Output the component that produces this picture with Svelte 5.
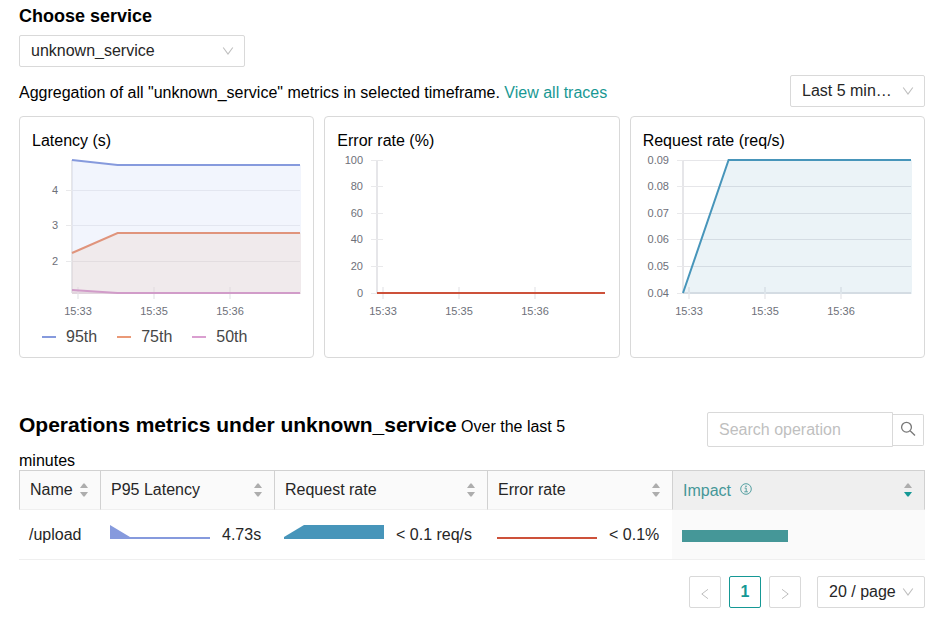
<script>
  let cardWidth = $state(293);

  const LEFT = 52;
  const TOP = 10;
  const BOTTOM = 143;
  const xTicks = [
    { at: 6 / 228, label: '15:33' },
    { at: 82 / 228, label: '15:35' },
    { at: 158 / 228, label: '15:36' }
  ];
  const stops = [0, 0.2, 1];

  const charts = [
    {
      title: 'Latency (s)',
      grid: true,
      ticks: [['4', 40], ['3', 75], ['2', 111]],
      series: [
        { name: '95th', color: '#869add', fill: '#dfe8fb', opacity: 0.42, ys: [10, 15, 15] },
        { name: '75th', color: '#e0947c', fill: '#ea9977', opacity: 0.12, ys: [103, 83, 83] },
        { name: '50th', color: '#d19cc9', fill: '#d79ccd', opacity: 0.12, ys: [140, 143, 143] }
      ],
      legend: [['95th', '#869add'], ['75th', '#ea9977'], ['50th', '#da9fd0']]
    },
    {
      title: 'Error rate (%)',
      grid: false,
      ticks: [['100', 10], ['80', 36], ['60', 63], ['40', 89], ['20', 116], ['0', 143]],
      series: [{ name: 'Error rate', color: '#cd513a', fill: 'none', opacity: 0, ys: [143, 143, 143] }],
      legend: []
    },
    {
      title: 'Request rate (req/s)',
      grid: true,
      ticks: [['0.09', 10], ['0.08', 36], ['0.07', 63], ['0.06', 89], ['0.05', 116], ['0.04', 143]],
      series: [{ name: 'Request rate', color: '#4795ba', fill: '#4795ba', opacity: 0.11, ys: [143, 10, 10] }],
      legend: []
    }
  ];

  const columns = ['Name', 'P95 Latency', 'Request rate', 'Error rate', 'Impact'];
  const impact = 45.5;
  const right = $derived(cardWidth - 13);
  const span = $derived(right - LEFT);

  function points(ys, end) {
    return ys.map((y, i) => `${i === 2 ? end : LEFT + stops[i] * span},${y}`).join(' ');
  }
</script>

{#snippet arrow()}
  <svg class="arrow" width="12" height="12" viewBox="0 0 12 12" aria-hidden="true">
    <path d="M1.2 2.5 6 9l4.8-6.5" fill="none" stroke="#bfbfbf" stroke-width="1.1" />
  </svg>
{/snippet}

<main>
  <h2 class="choose"><label for="service">Choose service</label></h2>
  <div class="select service">
    <select id="service"><option>unknown_service</option></select>
    {@render arrow()}
  </div>

  <div class="summary">
    <p>Aggregation of all "unknown_service" metrics in selected timeframe. <a href="#traces">View all traces</a></p>
    <div class="select timeframe">
      <select aria-label="Timeframe"><option>Last 5 minutes</option></select>
      {@render arrow()}
    </div>
  </div>

  <div class="cards">
    {#each charts as chart}
      <section class="card">
        <h3>{chart.title}</h3>
        <div class="plot" bind:clientWidth={cardWidth}>
          <svg width={cardWidth} height="170" role="img" aria-label={chart.title}>
            <rect x={LEFT - 1} y={TOP} width="2" height={BOTTOM - TOP} fill="#e6e6e9" />
            {#if chart.grid}
              <rect x={LEFT} y={BOTTOM - 1} width={span} height="2" fill="#e6e6e9" />
            {/if}
            {#each chart.ticks as [label, y]}
              <rect x={LEFT - 6} y={y} width="12" height="1" fill="#e9e9eb" />
              {#if chart.grid}
                <rect x={LEFT} y={y} width={span} height="1" fill="#e6e6e9" />
              {/if}
              <text x={LEFT - 14} y={y + 4} text-anchor="end">{label}</text>
            {/each}
            {#each xTicks as tick}
              <rect x={Math.round(LEFT + tick.at * span) - 1} y={BOTTOM - 6} width="2" height="12" fill="#efeff1" />
              <text x={Math.round(LEFT + tick.at * span)} y={BOTTOM + 22} text-anchor="middle">{tick.label}</text>
            {/each}
            {#each chart.series as s}
              <polygon points="{LEFT},{BOTTOM + 1} {points(s.ys, right + 1)} {right + 1},{BOTTOM + 1}" fill={s.fill} fill-opacity={s.opacity} />
            {/each}
            {#each chart.series as s}
              <polyline points={points(s.ys, right)} fill="none" stroke={s.color} stroke-width="2" />
            {/each}
          </svg>
        </div>
        {#if chart.legend.length}
          <ul>
            {#each chart.legend as [name, color]}
              <li>
                <svg width="14" height="2" aria-hidden="true"><rect width="14" height="2" fill={color} /></svg>
                {name}
              </li>
            {/each}
          </ul>
        {/if}
      </section>
    {/each}
  </div>

  <div class="operations">
    <div class="heading"><h2>Operations metrics under unknown_service</h2> Over the last 5 minutes</div>
    <form class="search" onsubmit={(e) => e.preventDefault()}>
      <input type="text" placeholder="Search operation" aria-label="Search operation" />
      <button type="submit" aria-label="Search">
        <svg width="16" height="16" viewBox="0 0 16 16" aria-hidden="true">
          <g fill="none" stroke="#777" stroke-width="1.3"><circle cx="6.5" cy="6.2" r="4.9" /><path d="m10.1 9.8 4.9 4.7" /></g>
        </svg>
      </button>
    </form>
  </div>

  <table>
    <colgroup>
      <col class="c-name" /><col class="c-latency" /><col class="c-request" /><col class="c-error" /><col />
    </colgroup>
    <thead>
      <tr>
        {#each columns as name, i}
          <th scope="col" class:sorted={i === 4} aria-sort={i === 4 ? 'descending' : undefined}>
            <div class="head">
              <span>{name}</span>
              {#if i === 4}
                <svg class="info" width="12" height="12" viewBox="0 0 12 12" aria-hidden="true">
                  <g fill="none" stroke="#459798" stroke-width=".9"><circle cx="6" cy="6" r="5.3" /><path d="M4.6 5.1h1.6v3.6M4.3 8.8h3.6" /></g>
                  <circle cx="6" cy="3.2" r=".8" fill="#459798" />
                </svg>
              {/if}
              <button class="sort" type="button" aria-label="Sort by {name}">
                <svg width="8" height="14" viewBox="0 0 8 14" aria-hidden="true">
                  <path d="M0 5h8L4.6.4H3.4z" fill="#adadad" />
                  <path d="M0 9h8l-3.4 4.6H3.4z" fill={i === 4 ? '#159895' : '#adadad'} />
                </svg>
              </button>
            </div>
          </th>
        {/each}
      </tr>
    </thead>
    <tbody>
      <tr>
        <td>/upload</td>
        <td>
          <div class="metric">
            <svg width="100" height="14" aria-hidden="true"><path d="M0 0 20 12H100V14H0z" fill="#869add" /></svg>
            4.73s
          </div>
        </td>
        <td>
          <div class="metric">
            <svg width="100" height="14" aria-hidden="true"><path d="M0 12 20 0H100V14H0z" fill="#4795ba" /></svg>
            &lt; 0.1 req/s
          </div>
        </td>
        <td>
          <div class="metric">
            <svg width="100" height="14" aria-hidden="true"><path d="M0 12H100V14H0z" fill="#cd513a" /></svg>
            &lt; 0.1%
          </div>
        </td>
        <td class="sorted"><div class="impact" style:width="{impact}%"></div></td>
      </tr>
    </tbody>
  </table>

  <nav aria-label="Pagination">
    <button type="button" aria-label="Previous page" disabled>
      <svg width="12" height="12" viewBox="0 0 12 12" aria-hidden="true"><path d="M9 1.3 2.8 6 9 10.7" fill="none" stroke="#bfbfbf" /></svg>
    </button>
    <button type="button" class="current" aria-current="page">1</button>
    <button type="button" aria-label="Next page" disabled>
      <svg width="12" height="12" viewBox="0 0 12 12" aria-hidden="true"><path d="M3 1.3 9.2 6 3 10.7" fill="none" stroke="#bfbfbf" /></svg>
    </button>
    <div class="select size">
      <select aria-label="Page size"><option>20 / page</option></select>
      {@render arrow()}
    </div>
  </nav>
</main>

<style>
  :global(body) {
    background: #fff;
  }
  main {
    padding: 4px 17px 24px 19px;
    font: 16px 'Liberation Sans', Arial, sans-serif;
    color: #000;
  }
  main * {
    box-sizing: border-box;
  }
  h2, h3, p, ul {
    margin: 0;
    padding: 0;
  }
  button, input, select {
    font: inherit;
  }
  .choose {
    font-size: 18px;
    line-height: 24px;
    margin-bottom: 7px;
  }
  .select {
    position: relative;
    height: 32px;
  }
  .select select {
    appearance: none;
    width: 100%;
    height: 100%;
    margin: 0;
    padding: 0 32px 1px 11px;
    border: 1px solid #d9d9d9;
    border-radius: 2px;
    background: #fff;
    color: #262626;
    text-overflow: ellipsis;
    white-space: nowrap;
    overflow: hidden;
  }
  .arrow {
    position: absolute;
    right: 11px;
    top: 10px;
    pointer-events: none;
  }
  .service {
    width: 226px;
  }
  .timeframe {
    width: 135px;
  }
  .summary {
    display: flex;
    justify-content: space-between;
    align-items: center;
    margin: 8px 0 9px;
  }
  .summary p {
    padding-top: 4px;
  }
  a {
    color: #199893;
    text-decoration: none;
  }
  .cards {
    display: grid;
    grid-template-columns: repeat(3, 1fr);
    gap: 10px;
  }
  .card {
    min-width: 0;
    min-height: 242px;
    border: 1px solid #d9d9d9;
    border-radius: 4px;
  }
  .card h3 {
    font-size: 16px;
    font-weight: 400;
    line-height: 18px;
    padding: 15px 12px 0;
  }
  .plot {
    overflow: hidden;
    height: 170px;
  }
  .plot svg {
    display: block;
  }
  text {
    font-size: 11px;
    fill: #6e7079;
  }
  ul {
    display: flex;
    gap: 20px;
    padding: 8px 22px;
    line-height: 18px;
    list-style: none;
    color: #464646;
  }
  li {
    display: flex;
    align-items: center;
    gap: 10px;
  }
  .operations {
    display: grid;
    grid-template-columns: 2fr 1fr;
    align-items: start;
    margin-top: 40px;
  }
  .heading {
    line-height: 18px;
  }
  .heading h2 {
    display: inline;
    font-size: 21px;
    line-height: 54px;
  }
  .search {
    display: flex;
    justify-content: flex-end;
    align-items: center;
    padding: 14px 1px 0 0;
  }
  .search input {
    width: 186px;
    height: 35px;
    padding: 0 11px;
    border: 1px solid #d9d9d9;
    border-radius: 2px 0 0 2px;
  }
  .search input::placeholder {
    color: #bfbfbf;
  }
  .search button {
    display: grid;
    place-items: center;
    width: 31px;
    height: 32px;
    padding: 0 0 2px;
    border: 1px solid #d9d9d9;
    border-left: 0;
    border-radius: 0 2px 2px 0;
    background: #fff;
  }
  table {
    width: 100%;
    table-layout: fixed;
    border-collapse: separate;
    border-spacing: 0;
    color: #262626;
  }
  .c-name { width: 81px; }
  .c-latency { width: 174px; }
  .c-request { width: 213px; }
  .c-error { width: 185px; }
  th {
    height: 40px;
    padding: 0 12px 0 10px;
    border: solid #d1d1d1;
    border-width: 1px 0 0 1px;
    border-bottom: 1px solid #efefef;
    background: #fafafa;
    font-weight: 400;
    text-align: left;
  }
  th:last-child {
    border-right: 1px solid #d1d1d1;
  }
  th.sorted {
    background: #efefef;
    color: #459798;
  }
  th.sorted span {
    padding-top: 2px;
  }
  .head {
    display: flex;
    align-items: center;
  }
  .info {
    margin: 0 0 2px 9px;
  }
  .sort {
    display: block;
    margin-left: auto;
    padding: 0;
    border: 0;
    background: none;
  }
  .sort svg {
    display: block;
  }
  td {
    height: 50px;
    padding: 0 10px;
    border-bottom: 1px solid #efefef;
    white-space: nowrap;
  }
  td.sorted {
    background: #fafafa;
  }
  .metric {
    display: flex;
    align-items: center;
    gap: 12px;
  }
  .metric svg {
    margin-bottom: 6px;
  }
  .impact {
    height: 12px;
    margin-top: 3px;
    background: #459798;
  }
  nav {
    display: flex;
    justify-content: flex-end;
    gap: 8px;
    padding-top: 16px;
  }
  nav button {
    display: grid;
    place-items: center;
    width: 32px;
    height: 32px;
    padding: 4px 0 0;
    border: 1px solid #d9d9d9;
    border-radius: 2px;
    background: #fff;
  }
  nav .current {
    padding: 0;
    border-color: #159895;
    color: #159895;
    font-weight: 700;
  }
  .size {
    width: 108px;
    margin-left: 8px;
  }
  .size select {
    padding-right: 24px;
  }
</style>
